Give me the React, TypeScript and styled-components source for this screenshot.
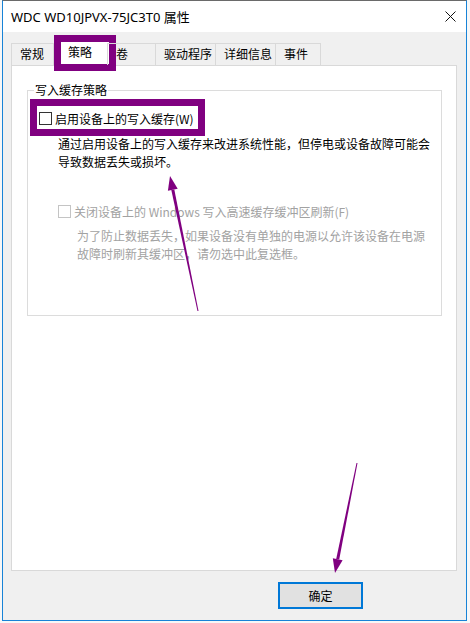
import styled, { createGlobalStyle } from "styled-components"

const GlobalStyle = createGlobalStyle`
  body {
    margin: 0;
    background: #f7f7f7;
    font-family: "Noto Sans", "Noto Sans CJK SC", sans-serif;
    font-size: 12px;
  }
`

const Screen = styled.div`
  position: relative;
  width: 470px;
  height: 623px;
  padding: 0 3px 2px 2px;
  box-sizing: border-box;
`

const Window = styled.div`
  height: 621px;
  display: flex;
  flex-direction: column;
  border: 1px solid #1883d7;
  border-top-color: #6a6a6a;
  box-sizing: border-box;
`

const TitleBar = styled.div`
  height: 31px;
  flex-shrink: 0;
  background: #fff;
  display: flex;
  align-items: center;
  justify-content: space-between;
  padding: 0 10px 0 8px;
  font-family: "Noto Sans", "Noto Sans CJK SC", sans-serif;
  font-size: 13px;
  color: #000;
`

const Content = styled.div`
  flex: 1;
  background: #f0f0f0;
  display: flex;
  flex-direction: column;
  padding: 11px 9px 11px 8px;
`

const TabStrip = styled.div`
  display: flex;
  height: 22px;
  font-family: "Noto Sans CJK SC", sans-serif;
`

const Tab = styled.div<{ $w: number; $last?: boolean }>`
  position: relative;
  width: ${p => p.$w}px;
  box-sizing: border-box;
  padding-left: 8px;
  border: 1px solid #d9d9d9;
  border-bottom: none;
  border-right: ${p => (p.$last ? "1px solid #d9d9d9" : "none")};
  line-height: 20px;
  color: #000;
`

const Highlight = styled.div`
  position: absolute;
  left: 0;
  top: -9px;
  width: 62px;
  height: 36px;
  box-sizing: border-box;
  border: 7px solid #800080;
  background: #fff;
  padding-left: 7px;
  line-height: 20px;
`

const Panel = styled.div`
  flex: 1;
  background: #fff;
  border: 1px solid #d9d9d9;
  padding: 16px 14px 0 15px;
  font-family: "Noto Sans CJK SC", sans-serif;
`

const Group = styled.fieldset`
  margin: 0;
  padding: 0;
  height: 234px;
  box-sizing: border-box;
  border: 1px solid #dcdcdc;
`

const Legend = styled.legend`
  margin-left: 6px;
  padding: 0 1px;
  line-height: 16px;
  color: #000;
`

const OptionBox = styled.div`
  margin: 1px 0 0 2px;
  width: 175px;
  height: 37px;
  box-sizing: border-box;
  border: 7px solid #800080;
  padding: 1px 0 0 2px;
  display: flex;
  align-items: center;
`

const Option = styled.label<{ $disabled?: boolean; $top?: number; $left?: number }>`
  display: flex;
  align-items: center;
  gap: 3px;
  height: 18px;
  margin: ${p => p.$top ?? 0}px 0 0 ${p => p.$left ?? 0}px;
  color: ${p => (p.$disabled ? "#a2a2a2" : "#000")};
  white-space: nowrap;
`

const Box = styled.span<{ $disabled?: boolean }>`
  width: 13px;
  height: 13px;
  box-sizing: border-box;
  border: 1px solid ${p => (p.$disabled ? "#c4c4c4" : "#333")};
  background: #fff;
  flex-shrink: 0;
`

const Note = styled.p<{ $disabled?: boolean; $top: number; $left: number }>`
  margin: ${p => p.$top}px 0 0 ${p => p.$left}px;
  line-height: 18px;
  white-space: nowrap;
  color: ${p => (p.$disabled ? "#a2a2a2" : "#000")};
`

const Footer = styled.div`
  display: flex;
  justify-content: flex-end;
  margin-top: 11px;
  padding-right: 94px;
`

const Button = styled.button`
  width: 85px;
  height: 27px;
  border: 2px solid #0078d7;
  background: #e1e1e1;
  font-family: "Noto Sans CJK SC", sans-serif;
  font-size: 12px;
  color: #000;
  padding: 0;
`

const Marks = styled.svg`
  position: absolute;
  left: 0;
  top: 0;
  pointer-events: none;
`

const tabs = [
  { label: "常规", w: 42 },
  { label: "策略", w: 54, active: true },
  { label: "卷", w: 48 },
  { label: "驱动程序", w: 60 },
  { label: "详细信息", w: 60 },
  { label: "事件", w: 46 },
]

export default function App() {
  return (
    <>
      <GlobalStyle />
      <Screen>
        <Window>
          <TitleBar>
            <span>WDC WD10JPVX-75JC3T0 属性</span>
            <svg width="11" height="11" viewBox="0 0 11 11">
              <path d="M0.5 0.5 L10.5 10.5 M10.5 0.5 L0.5 10.5" stroke="#111" strokeWidth="1" fill="none" />
            </svg>
          </TitleBar>
          <Content>
            <TabStrip>
              {tabs.map((t, i) => (
                <Tab key={t.label} $w={t.w} $last={i === tabs.length - 1}>
                  {t.active ? <Highlight>{t.label}</Highlight> : t.label}
                </Tab>
              ))}
            </TabStrip>
            <Panel>
              <Group>
                <Legend>写入缓存策略</Legend>
                <OptionBox>
                  <Option>
                    <Box />
                    启用设备上的写入缓存(W)
                  </Option>
                </OptionBox>
                <Note $top={-1} $left={30}>
                  通过启用设备上的写入缓存来改进系统性能，但停电或设备故障可能会
                  <br />
                  导致数据丢失或损坏。
                </Note>
                <Option $disabled $top={31} $left={30}>
                  <Box $disabled />
                  关闭设备上的 Windows 写入高速缓存缓冲区刷新(F)
                </Option>
                <Note $disabled $top={7} $left={49}>
                  为了防止数据丢失，如果设备没有单独的电源以允许该设备在电源
                  <br />
                  故障时刷新其缓冲区，请勿选中此复选框。
                </Note>
              </Group>
            </Panel>
            <Footer>
              <Button>确定</Button>
            </Footer>
          </Content>
        </Window>
        <Marks width="470" height="623" viewBox="0 0 470 623">
          <polygon points="174.3,189.4 171.3,190 197.5,311.1 198.5,310.9" fill="#800080" />
          <polygon points="170,176 177.7,188.7 167.9,190.7" fill="#800080" />
          <polygon points="339.2,559.6 336.2,559 356.5,462.9 357.5,463.1" fill="#800080" />
          <polygon points="335,573 342.6,560.3 332.8,558.3" fill="#800080" />
        </Marks>
      </Screen>
    </>
  )
}
